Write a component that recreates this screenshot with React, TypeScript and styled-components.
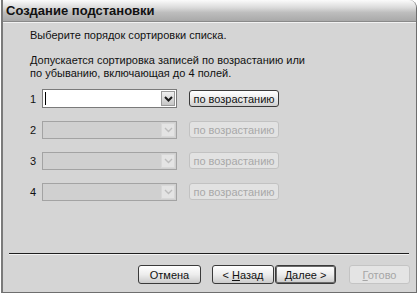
import { ReactElement } from 'react'
import styled, { createGlobalStyle } from 'styled-components'

const GlobalStyle = createGlobalStyle`
	html, body {
		margin: 0;
		padding: 0;
		background: #ffffff;
	}
	body {
		font-family: "Liberation Sans", Arial, sans-serif;
		font-size: 11px;
		color: #111;
	}
`

const Window = styled.div`
	box-sizing: border-box;
	width: 416px;
	height: 293px;
	margin-left: 1px;
	display: flex;
	flex-direction: column;
	background: #d5d5d5;
	border: 1px solid #6e6e6e;
	border-left: 2px solid #7a7a7a;
	border-top: none;
	border-top-right-radius: 8px;
	overflow: hidden;
`

const TitleBar = styled.div`
	height: 21px;
	display: flex;
	align-items: center;
	padding-left: 3px;
	background: linear-gradient(#fbfbfb 0%, #dcdcdc 35%, #bdbdbd 60%, #a9a9a9 100%);
	border-bottom: 1px solid #8a8a8a;
	font-weight: bold;
	font-size: 13px;
	color: #111;
`

const Body = styled.div`
	flex: 1;
	display: flex;
	flex-direction: column;
	padding: 4px 5px 0 5px;
	border-top: 1px solid #f2f2f2;
`

const Text = styled.p<{ $top: number }>`
	margin: ${(p) => p.$top}px 0 0 22px;
	line-height: 13px;
`

const Rows = styled.div`
	display: flex;
	flex-direction: column;
	gap: 12px;
	margin: 9px 0 0 22px;
`

const Row = styled.div`
	display: flex;
	align-items: center;
	height: 19px;
`

const Num = styled.span`
	width: 12px;
	color: #111;
`

const Combo = styled.div<{ $disabled?: boolean }>`
	box-sizing: border-box;
	width: 135px;
	height: ${(p) => (p.$disabled ? 18 : 19)}px;
	display: flex;
	align-items: stretch;
	border: 1px solid ${(p) => (p.$disabled ? '#a3a3a3' : '#7a7a7a')};
	background: ${(p) => (p.$disabled ? '#d0d0d0' : '#ffffff')};
`

const Field = styled.div`
	flex: 1;
	display: flex;
	align-items: center;
	padding-left: 2px;
`

const Caret = styled.span`
	width: 1px;
	height: 13px;
	background: #000;
`

const Arrow = styled.div<{ $disabled?: boolean }>`
	width: 14px;
	display: flex;
	align-items: center;
	justify-content: center;
	margin: 1px;
	box-sizing: border-box;
	border: 1px solid ${(p) => (p.$disabled ? '#d8d8d8' : '#9a9a9a')};
	background: ${(p) => (p.$disabled ? '#e4e4e4' : 'linear-gradient(#f0f0f0, #c6c6c6)')};
`

const OrderButton = styled.button<{ $disabled?: boolean }>`
	box-sizing: border-box;
	width: 90px;
	height: 17px;
	margin-left: 12px;
	padding: 0;
	font-family: "Liberation Sans", Arial, sans-serif;
	font-size: 11px;
	border-radius: 3px;
	border: 1px solid ${(p) => (p.$disabled ? '#c2c2c2' : '#3a3a3a')};
	background: ${(p) =>
		p.$disabled ? '#e2e2e2' : 'linear-gradient(#ffffff 0%, #ececec 50%, #cfcfcf 100%)'};
	color: ${(p) => (p.$disabled ? '#a8a8a8' : '#111')};
`

const Spacer = styled.div`
	flex: 1;
`

const Separator = styled.div`
	height: 1px;
	margin: 0 0 0 1px;
	width: 400px;
	background: #1e1e1e;
	border-bottom: 1px solid #f3f3f3;
`

const Footer = styled.div`
	display: flex;
	justify-content: flex-end;
	padding: 10px 0 8px 0;
	margin-right: 1px;
`

const WizardButton = styled.button<{
	$disabled?: boolean
	$gap?: number
	$pressed?: boolean
	$width?: number
}>`
	box-sizing: border-box;
	width: ${(p) => p.$width ?? 62}px;
	height: 19px;
	margin-left: ${(p) => p.$gap ?? 0}px;
	padding: 0;
	font-family: "Liberation Sans", Arial, sans-serif;
	font-size: 11px;
	border-radius: 3px;
	border: 1px solid ${(p) => (p.$disabled ? '#c4c4c4' : '#3a3a3a')};
	box-shadow: ${(p) => (p.$pressed ? 'inset 0 0 0 1px #6a6a6a' : 'none')};
	background: ${(p) =>
		p.$disabled ? '#e4e4e4' : 'linear-gradient(#ffffff 0%, #ededed 50%, #cbcbcb 100%)'};
	color: ${(p) => (p.$disabled ? '#a6a6a6' : '#111')};

	u {
		text-decoration: underline;
	}
`

const Chevron = ({ disabled }: { disabled?: boolean }): ReactElement => (
	<svg width="9" height="6" viewBox="0 0 9 6">
		<path
			d="M1 1 L4.5 4.5 L8 1"
			fill="none"
			stroke={disabled ? '#bdbdbd' : '#1a1a1a'}
			strokeWidth={disabled ? 1.4 : 2}
		/>
	</svg>
)

const rows = [1, 2, 3, 4]

const App = (): ReactElement => {
	return (
		<>
			<GlobalStyle />
			<Window>
				<TitleBar>Создание подстановки</TitleBar>
				<Body>
					<Text $top={2}>Выберите порядок сортировки списка.</Text>
					<Text $top={12}>
						Допускается сортировка записей по возрастанию или
						<br />
						по убыванию, включающая до 4 полей.
					</Text>
					<Rows>
						{rows.map((n) => {
							const disabled = n !== 1
							return (
								<Row key={n}>
									<Num>{n}</Num>
									<Combo $disabled={disabled}>
										<Field>{!disabled && <Caret />}</Field>
										<Arrow $disabled={disabled}>
											<Chevron disabled={disabled} />
										</Arrow>
									</Combo>
									<OrderButton $disabled={disabled}>по возрастанию</OrderButton>
								</Row>
							)
						})}
					</Rows>
					<Spacer />
					<Separator />
					<Footer>
						<WizardButton $width={63}>Отмена</WizardButton>
						<WizardButton $gap={11}>
							&lt; <u>Н</u>азад
						</WizardButton>
						<WizardButton $gap={1} $pressed $width={61}>
							<u>Д</u>алее &gt;
						</WizardButton>
						<WizardButton $gap={13} $disabled $width={61}>
							<u>Г</u>отово
						</WizardButton>
					</Footer>
				</Body>
			</Window>
		</>
	)
}

export default App
